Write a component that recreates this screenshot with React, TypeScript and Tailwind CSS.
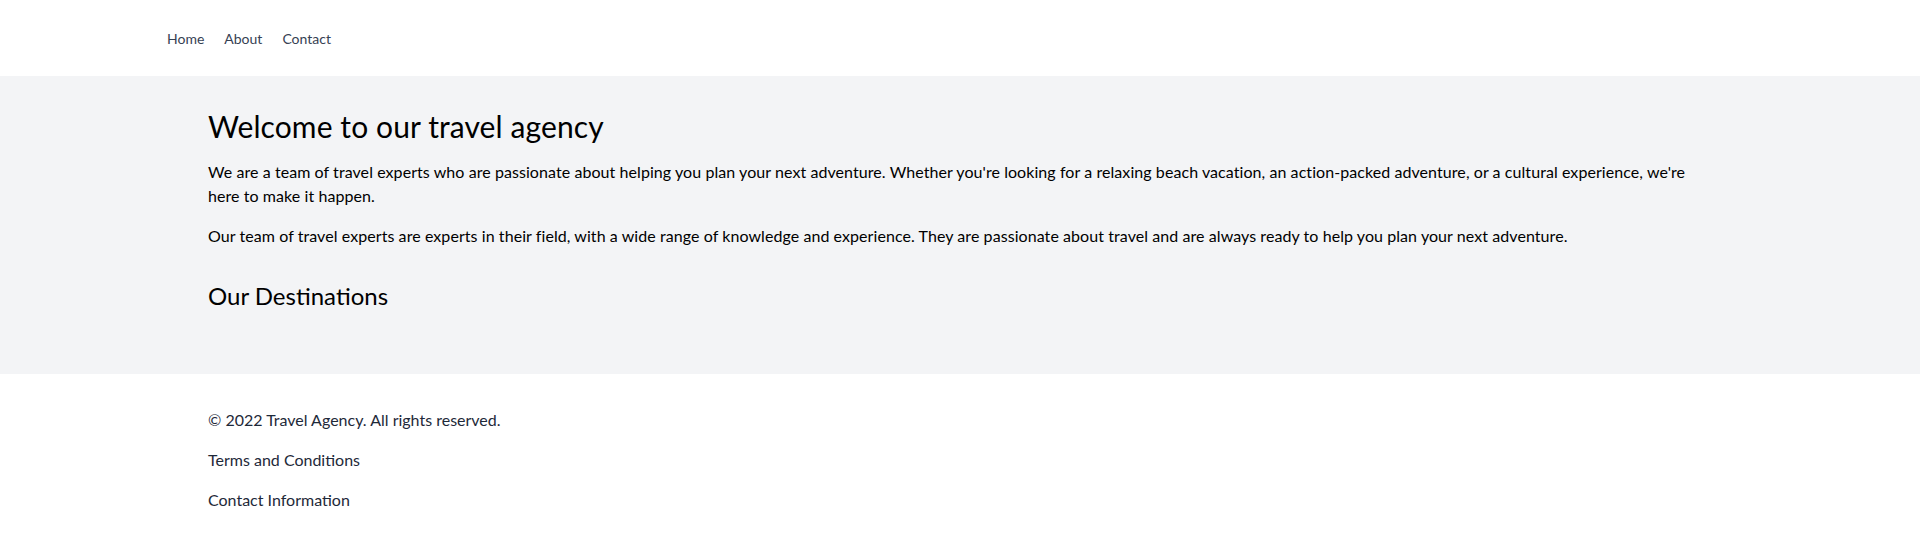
import React from 'react';

const navLinks = ['Home', 'About', 'Contact'];

export default function App() {
  return (
    <div className="min-h-screen bg-white text-black" style={{ fontFamily: 'Lato, "Noto Sans", sans-serif' }}>
      <header className="h-[76px] flex items-center pl-[167px] pt-[2px]">
        <nav className="flex gap-5 text-sm text-gray-700">
          {navLinks.map((l) => (
            <a key={l} href="#">
              {l}
            </a>
          ))}
        </nav>
      </header>

      <main className="bg-gray-100">
        <div className="container mx-auto px-4 pt-8 pb-[62px]">
          <h1 className="text-3xl mb-4 tracking-[0.1px]">Welcome to our travel agency</h1>
          <p className="mb-4 tracking-[0.07px]">
            We are a team of travel experts who are passionate about helping you plan your next adventure. Whether
            you're looking for a relaxing beach vacation, an action-packed adventure, or a cultural experience, we're
            here to make it happen.
          </p>
          <p className="mb-8 tracking-[0.07px]">
            Our team of travel experts are experts in their field, with a wide range of knowledge and experience. They
            are passionate about travel and are always ready to help you plan your next adventure.
          </p>
          <h2 className="text-2xl">Our Destinations</h2>
        </div>
      </main>

      <footer className="container mx-auto px-4 pt-[34px] pb-8 text-gray-800">
        <p className="mb-4">© 2022 Travel Agency. All rights reserved.</p>
        <p className="mb-4">Terms and Conditions</p>
        <p>Contact Information</p>
      </footer>
    </div>
  );
}
